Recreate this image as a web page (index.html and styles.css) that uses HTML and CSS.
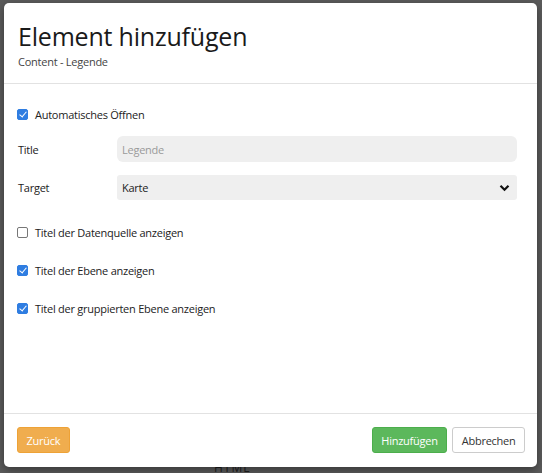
FILE: index.html
```html
<!DOCTYPE html>
<html lang="de">
<head>
<meta charset="utf-8">
<title>Element hinzufügen</title>
<link rel="stylesheet" href="styles.css">
</head>
<body>
<div class="behind">HTML</div>
<div class="modal">
  <div class="modal-header">
    <h1 class="modal-title">Element hinzufügen</h1>
    <div class="modal-subtitle">Content - Legende</div>
  </div>
  <div class="modal-body">
    <label class="check-row first">
      <input type="checkbox" class="check" checked>
      <span>Automatisches Öffnen</span>
    </label>
    <div class="field-row">
      <span class="field-label">Title</span>
      <input class="text-input" type="text" placeholder="Legende">
    </div>
    <div class="field-row">
      <span class="field-label">Target</span>
      <div class="select">
        <span>Karte</span>
        <svg class="chev" width="11" height="8" viewBox="0 0 11 8"><path d="M1.5 1.8 L5.5 5.8 L9.5 1.8" fill="none" stroke="#111" stroke-width="2.2"/></svg>
      </div>
    </div>
    <label class="check-row gap-top">
      <input type="checkbox" class="check">
      <span>Titel der Datenquelle anzeigen</span>
    </label>
    <label class="check-row">
      <input type="checkbox" class="check" checked>
      <span>Titel der Ebene anzeigen</span>
    </label>
    <label class="check-row">
      <input type="checkbox" class="check" checked>
      <span>Titel der gruppierten Ebene anzeigen</span>
    </label>
  </div>
  <div class="modal-footer">
    <button class="btn btn-warning">Zurück</button>
    <div class="footer-right">
      <button class="btn btn-success">Hinzufügen</button>
      <button class="btn btn-default">Abbrechen</button>
    </div>
  </div>
</div>
</body>
</html>
```
FILE: styles.css
```css
html, body {
  margin: 0;
  padding: 0;
}
body {
  width: 542px;
  height: 473px;
  background: #5b5b5b;
  font-family: "Open Sans", "Noto Sans", sans-serif;
  color: #222;
  font-size: 11px;
  letter-spacing: -0.25px;
  box-sizing: border-box;
  padding: 3px 5px 6px 4px;
  position: relative;
  overflow: hidden;
}
.behind {
  position: absolute;
  left: 214px;
  top: 459px;
  font-size: 12px;
  color: #1e1e1e;
  letter-spacing: 1px;
}
.modal {
  position: relative;
  background: #fff;
  border-radius: 5px;
  height: 464px;
  display: flex;
  flex-direction: column;
  box-shadow: 0 3px 8px rgba(0,0,0,0.4);
}
.modal-header {
  height: 81px;
  box-sizing: border-box;
  padding: 17px 14px 0 14px;
  border-bottom: 1px solid #e2e2e2;
}
.modal-title {
  margin: 0;
  font-size: 25px;
  font-weight: 400;
  line-height: 32px;
  color: #1a1a1a;
  letter-spacing: -0.2px;
}
.modal-subtitle {
  margin-top: 3px;
  font-size: 11px;
  color: #444;
  line-height: 14px;
}
.modal-body {
  flex: 1;
  padding: 21px 20px 0 13px;
  display: flex;
  flex-direction: column;
}
.check-row {
  display: flex;
  align-items: center;
  gap: 7px;
  height: 18px;
  margin-bottom: 20px;
}
.check-row.first {
  margin-bottom: 13px;
}
.check-row.gap-top {
  margin-top: 23px;
}
.check {
  appearance: none;
  -webkit-appearance: none;
  margin: 0;
  width: 11px;
  height: 11px;
  border: 1px solid #777;
  border-radius: 2px;
  box-sizing: border-box;
  background: #fff;
  position: relative;
}
.check:checked {
  background: #2f7de1;
  border-color: #2f7de1;
}
.check:checked::after {
  content: "";
  position: absolute;
  left: 2.5px;
  top: 0.5px;
  width: 3px;
  height: 6px;
  border: solid #fff;
  border-width: 0 1.6px 1.6px 0;
  transform: rotate(40deg);
}
.field-row {
  display: flex;
  align-items: center;
  margin-bottom: 13px;
}
.field-row + .field-row {
  margin-bottom: 0;
}
.field-label {
  width: 99px;
  padding-left: 1px;
}
.text-input {
  flex: 1;
  height: 26px;
  box-sizing: border-box;
  border: none;
  border-radius: 6px;
  background: #efefef;
  padding: 0 5px;
  font-family: inherit;
  font-size: 11px;
  letter-spacing: -0.25px;
  color: #222;
  outline: none;
}
.text-input::placeholder {
  color: #9a9a9a;
}
.select {
  flex: 1;
  height: 25px;
  box-sizing: border-box;
  border-radius: 3px;
  background: #efefef;
  padding: 0 7px 0 5px;
  display: flex;
  align-items: center;
  justify-content: space-between;
}
.modal-footer {
  height: 54px;
  box-sizing: border-box;
  border-top: 1px solid #e2e2e2;
  padding: 13px 12px 0 13px;
  display: flex;
  justify-content: space-between;
  align-items: flex-start;
}
.footer-right {
  display: flex;
  gap: 5px;
}
.btn {
  height: 26px;
  box-sizing: border-box;
  border-radius: 3px;
  font-family: inherit;
  font-size: 11px;
  letter-spacing: -0.25px;
  padding: 0 8.5px;
  border: 1px solid transparent;
  cursor: pointer;
}
.btn-warning {
  background: #f0ad4e;
  border-color: #eea236;
  color: #fff;
}
.btn-success {
  background: #5cb85c;
  border-color: #4cae4c;
  color: #fff;
}
.btn-default {
  background: #fff;
  border-color: #ccc;
  color: #333;
}
```
